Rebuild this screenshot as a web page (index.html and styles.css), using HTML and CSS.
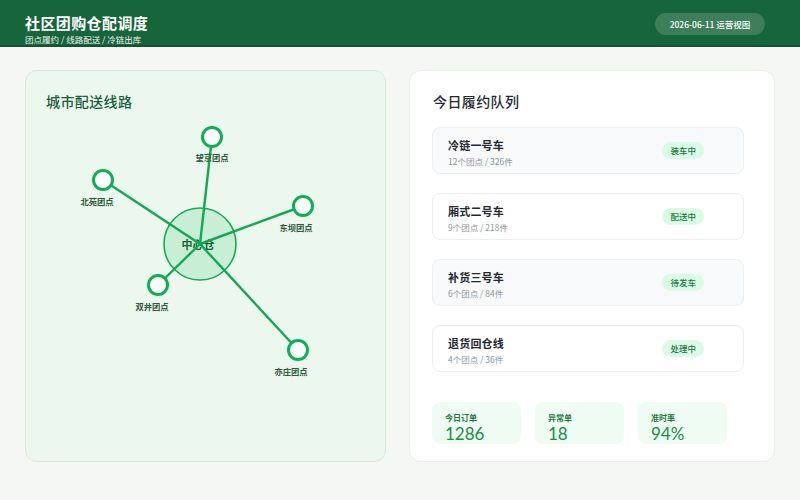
FILE: index.html
```html
<!DOCTYPE html>
<html lang="zh-CN">
<head>
<meta charset="UTF-8">
<title>社区团购仓配调度</title>
<link rel="stylesheet" href="styles.css">
</head>
<body>

<header class="topbar">
    <div class="brand">
        <h1>社区团购仓配调度</h1>
        <p>团点履约 / 线路配送 / 冷链出库</p>
    </div>
    <div class="date-pill">2026-06-11 运营视图</div>
</header>

<main class="board">
    <section class="card map-card">
        <h2>城市配送线路</h2>
        <svg class="route-map" viewBox="0 0 319 330" width="319" height="330">
            <circle class="hub" cx="154" cy="129" r="36"/>
            <text class="hub-label" x="152" y="134">中心仓</text>

            <g class="routes">
                <line x1="154" y1="129" x2="166" y2="22"/>
                <line x1="154" y1="129" x2="57"  y2="65"/>
                <line x1="154" y1="129" x2="257" y2="91"/>
                <line x1="154" y1="129" x2="112" y2="170"/>
                <line x1="154" y1="129" x2="252" y2="235"/>
            </g>

            <g class="stops">
                <circle cx="166" cy="22"  r="9.5"/>
                <circle cx="57"  cy="65"  r="9.5"/>
                <circle cx="257" cy="91"  r="9.5"/>
                <circle cx="112" cy="170" r="9.5"/>
                <circle cx="252" cy="235" r="9.5"/>
            </g>

            <g class="stop-labels">
                <text x="166" y="46">望京团点</text>
                <text x="51"  y="90">北苑团点</text>
                <text x="250" y="116">东坝团点</text>
                <text x="106" y="195">双井团点</text>
                <text x="245" y="260">亦庄团点</text>
            </g>
        </svg>
    </section>

    <section class="card queue-card">
        <h2>今日履约队列</h2>

        <ul class="queue">
            <li class="job alt">
                <div class="job-info">
                    <strong>冷链一号车</strong>
                    <span>12个团点 / 326件</span>
                </div>
                <em class="tag">装车中</em>
            </li>
            <li class="job">
                <div class="job-info">
                    <strong>厢式二号车</strong>
                    <span>9个团点 / 218件</span>
                </div>
                <em class="tag">配送中</em>
            </li>
            <li class="job alt">
                <div class="job-info">
                    <strong>补货三号车</strong>
                    <span>6个团点 / 84件</span>
                </div>
                <em class="tag">待发车</em>
            </li>
            <li class="job">
                <div class="job-info">
                    <strong>退货回仓线</strong>
                    <span>4个团点 / 36件</span>
                </div>
                <em class="tag">处理中</em>
            </li>
        </ul>

        <div class="stats">
            <div class="stat"><span>今日订单</span><b>1286</b></div>
            <div class="stat"><span>异常单</span><b>18</b></div>
            <div class="stat"><span>准时率</span><b>94%</b></div>
        </div>
    </section>
</main>

</body>
</html>
```

FILE: styles.css
```css
/* ─── Base ───────────────────────────────────────────────────── */
*{box-sizing:border-box;margin:0;padding:0}
body{
    font-family:"Noto Sans CJK SC","Noto Sans",sans-serif;
    background:#f4f7f4;
    width:800px;height:500px;overflow:hidden;
}

/* ─── Top bar ────────────────────────────────────────────────── */
.topbar{
    height:47px;
    background:#17653a;border-bottom:2px solid #0f5530;
    display:flex;justify-content:space-between;align-items:flex-start;
    padding:0 35px 0 25px;
}
.brand{color:#fff;padding-top:13px}
.brand h1{font-size:15px;line-height:20px;font-weight:700;letter-spacing:.4px}
.brand p{font-size:8.5px;line-height:12px;opacity:.92}
.date-pill{
    width:110px;height:22px;border-radius:11px;margin-top:13px;
    background:rgba(255,255,255,.17);color:#fff;
    font-size:8.5px;line-height:22px;text-align:center;font-weight:500;
}

/* ─── Board ──────────────────────────────────────────────────── */
.board{
    display:grid;grid-template-columns:361px 366px;gap:23px;
    padding:23px 25px 0;
}
.card{height:392px;border-radius:12px}
.card h2{font-size:14px;line-height:20px;font-weight:500;letter-spacing:.4px}

/* map */
.map-card{
    background:#ecf7ee;border:1px solid #d6eadb;
    padding:20px 20px 0;
}
.map-card h2{color:#17603a}
.route-map{display:block;margin-top:4px}
.hub{fill:#c8eed5;stroke:#16ab55;stroke-width:1.6}
.hub-label{font-size:11px;fill:#17603a;text-anchor:middle;font-weight:700}
.routes line{stroke:#13a851;stroke-width:2.4}
.stops circle{fill:#fff;stroke:#0daf52;stroke-width:3}
.stop-labels text{font-size:8.3px;fill:#2d5a3c;text-anchor:middle;font-weight:700}

/* queue */
.queue-card{
    background:#fff;border:1px solid #eceeec;
    padding:20px 23px 0 22px;
}
.queue-card h2{color:#1f2933;margin-left:1px}
.queue{list-style:none;margin-top:16px;display:flex;flex-direction:column;gap:19px}
.job{
    width:312px;height:47px;
    border:1px solid #eceff1;border-radius:8px;background:#fff;
    display:flex;justify-content:space-between;align-items:center;
    padding:0 39px 0 15px;
}
.job.alt{background:#f8f9fb}
.job-info{display:flex;flex-direction:column;padding-top:4px}
.job-info strong{font-size:11px;line-height:16px;font-weight:700;color:#1f2933;letter-spacing:.2px}
.job-info span{font-size:8.5px;line-height:13px;margin-top:2px;color:#8b96a6}
.tag{
    font-style:normal;font-size:8.5px;line-height:17px;font-weight:500;
    background:#dcfbe6;color:#177a3e;
    padding:0 8px;border-radius:9px;
}

/* stats */
.stats{display:flex;gap:14px;margin-top:30px}
.stat{
    width:89px;height:42px;
    background:#effcf3;border-radius:8px;
    padding:10px 0 0 13px;
    display:flex;flex-direction:column;
}
.stat span{font-size:8px;line-height:12px;font-weight:700;color:#1b7a40}
.stat b{font-family:Lato,sans-serif;font-size:17px;line-height:20px;font-weight:400;color:#14913f}
```
